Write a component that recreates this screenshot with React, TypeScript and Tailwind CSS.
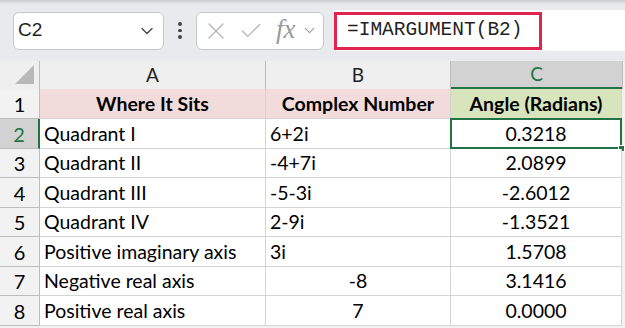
import { ChevronDown, X, Check } from "lucide-react";

const rows = [
    { a: "Quadrant I", b: "6+2i", c: "0.3218", bc: false },
    { a: "Quadrant II", b: "-4+7i", c: "2.0899", bc: false },
    { a: "Quadrant III", b: "-5-3i", c: "-2.6012", bc: false },
    { a: "Quadrant IV", b: "2-9i", c: "-1.3521", bc: false },
    { a: "Positive imaginary axis", b: "3i", c: "1.5708", bc: false },
    { a: "Negative real axis", b: "-8", c: "3.1416", bc: true },
    { a: "Positive real axis", b: "7", c: "0.0000", bc: true },
];

const heights = ["h-[30px]", "h-[29px]", "h-[30px]", "h-[29px]", "h-[30px]", "h-[29px]", "h-[30px]"];

const Toolbar = () => (
    <div className="relative h-[61px] bg-[#e8eaed] flex items-center">
        <div className="absolute top-0 left-0 right-0 h-[4px] bg-gradient-to-b from-[#c9cbce] to-transparent"></div>
        <div className="ml-[13px] w-[151px] h-[38px] bg-white border border-[#c6c8cb] rounded-[6px] flex items-center justify-between pl-[4px] pr-[6px]">
            <span className="text-[19px] text-[#1f1f1f]" style={{ fontFamily: "'Liberation Sans', sans-serif" }}>C2</span>
            <ChevronDown className="size-[20px] text-[#444]" strokeWidth={1.6} />
        </div>
        <div className="w-[32px] flex flex-col items-center gap-[3px]">
            <div className="size-[3.5px] rounded-full bg-[#444]"></div>
            <div className="size-[3.5px] rounded-full bg-[#444]"></div>
            <div className="size-[3.5px] rounded-full bg-[#444]"></div>
        </div>
        <div className="w-[128px] h-[38px] bg-white border border-[#c6c8cb] rounded-[6px] flex items-center pl-[5px]">
            <X className="size-[28px] text-[#b3b3b3]" strokeWidth={1.1} />
            <Check className="size-[26px] ml-[8px] text-[#b3b3b3]" strokeWidth={1.1} />
            <span className="ml-[12px] italic text-[27px] text-[#9a9a9a] leading-none -mt-[3px]" style={{ fontFamily: "'Liberation Serif', serif" }}>fx</span>
            <ChevronDown className="size-[17px] ml-[5px] text-[#9a9a9a]" strokeWidth={1.5} />
        </div>
        <div className="ml-[10px] flex-1 h-[41px] bg-white flex items-center">
            <div className="w-[208px] h-[38px] border-[3px] border-[#e0234e] flex items-center pl-[10px]">
                <span className="text-[19.5px] text-[#1f1f1f]" style={{ fontFamily: "'Liberation Mono', monospace" }}>=IMARGUMENT(B2)</span>
            </div>
        </div>
    </div>
);

const App = () => {
    return (
        <div className="w-[625px] h-[328px] overflow-hidden bg-[#f2f2f2]" style={{ fontFamily: "Lato, sans-serif" }}>
            <Toolbar />
            {/* column headers */}
            <div className="flex h-[28px] text-[19px] text-[#1f1f1f] bg-[#efefef]">
                <div className="relative w-[40px] border-r border-[#bdbdbd]">
                    <div
                        className="absolute right-[5px] bottom-[5px] w-[19px] h-[19px] bg-[#b8b8b8]"
                        style={{ clipPath: "polygon(100% 0, 100% 100%, 0 100%)" }}
                    ></div>
                </div>
                <div className="w-[226px] border-r border-[#bdbdbd] flex items-center justify-center">A</div>
                <div className="w-[185px] border-r border-[#bdbdbd] flex items-center justify-center">B</div>
                <div className="w-[171px] bg-[#d2d2d2] border-b-2 border-[#217346] text-[#217346] flex items-center justify-center">C</div>
                <div className="flex-1 border-l border-[#bdbdbd]"></div>
            </div>
            {/* header row */}
            <div className="flex h-[30px] text-[19.5px] font-bold text-black">
                <div className="w-[40px] bg-[#f2f2f2] border-r border-b border-[#bdbdbd] flex items-center justify-center font-normal text-[20px]">1</div>
                <div className="w-[226px] bg-[#f2dcdb] border-r border-b border-[#d4d4d4] flex items-center justify-center">Where It Sits</div>
                <div className="w-[185px] bg-[#f2dcdb] border-r border-b border-[#d4d4d4] flex items-center justify-center">Complex Number</div>
                <div className="w-[171px] bg-[#d8e4bc] border-r border-b border-[#d4d4d4] flex items-center justify-center">Angle (Radians)</div>
                <div className="flex-1"></div>
            </div>
            {rows.map((r, i) => {
                const sel = i === 0;
                return (
                    <div key={i} className={`flex ${heights[i]} text-[19.5px] text-black`}>
                        <div
                            className={
                                sel
                                    ? "w-[40px] bg-[#d2d2d2] border-r-2 border-b border-r-[#217346] border-b-[#bdbdbd] text-[#217346] flex items-center justify-center text-[20px]"
                                    : "w-[40px] bg-[#f2f2f2] border-r border-b border-[#bdbdbd] flex items-center justify-center text-[20px]"
                            }
                        >
                            {i + 2}
                        </div>
                        <div className="w-[226px] bg-white border-r border-b border-[#d4d4d4] flex items-center pl-[4px]">{r.a}</div>
                        <div
                            className={
                                r.bc
                                    ? "w-[185px] bg-white border-r border-b border-[#d4d4d4] flex items-center justify-center"
                                    : "w-[185px] bg-white border-r border-b border-[#d4d4d4] flex items-center pl-[4px]"
                            }
                        >
                            {r.b}
                        </div>
                        <div className="relative w-[171px] bg-white border-r border-b border-[#d4d4d4] flex items-center justify-center">
                            {r.c}
                            {sel && (
                                <>
                                    <div className="absolute -left-[1px] -top-[1px] -right-[1px] -bottom-[1px] border-2 border-[#217346]"></div>
                                    <div className="absolute -right-[4px] -bottom-[4px] w-[7px] h-[7px] bg-[#217346] border border-white"></div>
                                </>
                            )}
                        </div>
                        <div className="flex-1"></div>
                    </div>
                );
            })}
        </div>
    );
};

export default App;
